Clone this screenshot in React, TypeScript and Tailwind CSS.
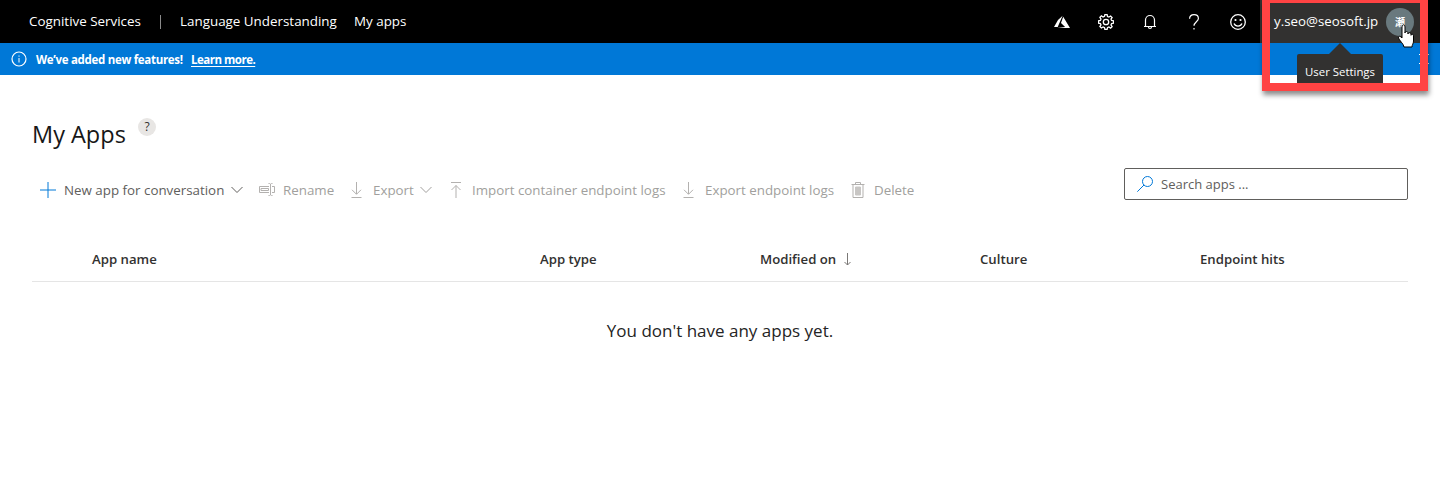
import React from "react";

type P = { children?: React.ReactNode; className?: string };

const Icon = ({ children, className = "" }: P) => (
  <svg viewBox="0 0 16 16" className={`size-4 shrink-0 ${className}`} fill="none" stroke="currentColor" strokeWidth="1">
    {children}
  </svg>
);

const Chevron = ({ className = "" }: P) => (
  <svg viewBox="0 0 12 8" className={`h-2 w-3 shrink-0 ${className}`} fill="none" stroke="currentColor">
    <path d="M.5 1 6 6.5 11.5 1" />
  </svg>
);

const Download = () => (
  <Icon className="text-[#b3b1af]">
    <path d="M7.5 0v12M3 7.800l4.500 4.500L12 7.800M2.500 15.500h10" />
  </Icon>
);

const Label = ({ children, className = "" }: P) => (
  <span className={`shrink-0 whitespace-nowrap ${className}`}>{children}</span>
);

function TopBar() {
  return (
    <header className="flex h-[43px] items-center bg-black text-[13.4px] text-white">
      <Label className="ml-[29px] w-[112px]">Cognitive Services</Label>
      <span className="ml-[19px] h-[14px] w-px bg-[#8a8a8a]" />
      <Label className="ml-[19px] w-[156px]">Language Understanding</Label>
      <Label className="ml-[18px] w-[54px]">My apps</Label>
      <div className="ml-auto flex items-center gap-7">
        <svg viewBox="0 0 16 16" className="size-4" fill="#fff">
          <path d="M8.6 1.8 4 5.9 0 13h3.7zM9.2 2.8 7 8.9l4.1 4.2-8 .9H16z" />
        </svg>
        <svg viewBox="0 0 16 16" className="size-4" fill="none" stroke="#fff" strokeWidth="1.3">
          <path d="M6.9.6h2.2l.4 1.9 1.4.6 1.7-1.1 1.5 1.5L13 5.1l.6 1.4 1.9.4v2.2l-1.9.4-.6 1.4 1.1 1.7-1.5 1.5-1.7-1.1-1.4.6-.4 1.9H6.9l-.4-1.9-1.4-.6L3.4 14l-1.5-1.5L3 10.9l-.6-1.4-1.9-.4V6.9l1.9-.4L3 5.1 1.9 3.4l1.5-1.5L5.1 3l1.4-.6z" />
          <circle cx="8" cy="8" r="2.7" />
        </svg>
        <svg viewBox="0 0 16 16" className="size-4" fill="none" stroke="#fff" strokeWidth="1.2">
          <path d="M3.5 12.5V6a4.5 4.5 0 0 1 9 0v6.5M2 12.5h12M6.5 13a1.5 1.5 0 0 0 3 0" />
        </svg>
        <svg viewBox="0 0 16 16" className="size-4" fill="none" stroke="#fff" strokeWidth="1.2">
          <path d="M3.6 4.8C3.6 2 5.5.7 8 .7s4.400 1.500 4.400 3.800C12.400 7.500 8 8 8 11.800M8 13.900v1.600" />
        </svg>
        <svg viewBox="0 0 16 16" className="size-4" fill="none" stroke="#fff" strokeWidth="1.3">
          <circle cx="8" cy="8" r="7.3" />
          <path d="M4 9.5c1.4 3.4 6.6 3.4 8 0" />
          <circle cx="5.5" cy="6" r="1.1" fill="#fff" stroke="none" />
          <circle cx="10.5" cy="6" r="1.1" fill="#fff" stroke="none" />
        </svg>
      </div>
      <div className="mr-5 ml-[14px] flex h-full w-[160px] items-center bg-[#323130] pl-[14px]">
        <Label className="w-[112px] text-[13.3px]">y.seo@seosoft.jp</Label>
        <span className="flex size-7 items-center justify-center rounded-full bg-[#69797e] font-['Noto_Sans_CJK_JP',sans-serif] text-[10px] font-bold">瀬</span>
      </div>
    </header>
  );
}

function Banner() {
  return (
    <div className="flex h-8 items-center bg-[#0078d7] text-[11.5px] font-bold text-white">
      <Icon className="ml-[11px]">
        <circle cx="8" cy="8" r="7" strokeWidth="1.2" />
        <path d="M8 7v4.500M8 4.500v1.200" />
      </Icon>
      <Label className="ml-[9px] w-[148px] pt-0.5 tracking-[-0.3px]">We’ve added new features!</Label>
      <Label className="ml-[7px] pt-0.5 tracking-[-0.5px] underline underline-offset-2">Learn more.</Label>
      <Icon className="mr-2 ml-auto">
        <path d="m3 3 10 10M13 3 3 13" />
      </Icon>
    </div>
  );
}

function UserHighlight() {
  return (
    <div className="absolute top-0 left-[1262px] h-[91px] w-[166px] border-8 border-t-[3px] border-[#ff4343] shadow-[1px_4px_5px_rgba(0,0,0,0.45)]">
      <svg viewBox="0 0 24 12" className="absolute top-10 left-[58px] h-3 w-6" fill="#323130">
        <path d="M12 0 24 12H0z" />
      </svg>
      <div className="absolute top-[51px] left-[27px] h-[29px] w-[86px] rounded-t-[2px] bg-[#323130] pt-2 text-center text-[11.4px] leading-[20px] font-medium text-white">
        User Settings
      </div>
      <svg viewBox="0 0 18 24" className="absolute top-[21px] left-[127px] h-6 w-[18px]" fill="#fff" stroke="#000" strokeWidth="1">
        <path d="M5 14V3c0-3 3-3 3 0v6c0-2 3-2 3 0v1c0-2 3-1.500 3 .3v1c0-1.700 2.500-1.300 2.500.500V17c0 3-1.500 3.500-1.500 6H7c0-2.500-5-7-5.500-9-.5-2 1.500-2.500 3.500 0z" />
      </svg>
    </div>
  );
}

function Toolbar() {
  return (
    <div className="flex h-8 items-center text-[13.35px] text-[#a19f9d]">
      <Icon className="ml-2 text-[#0078d7]">
        <path d="M8 0v16M0 8h16" />
      </Icon>
      <Label className="ml-2 w-[159px] pt-px text-[#605e5c]">New app for conversation</Label>
      <Chevron className="ml-2 text-[#605e5c]" />
      <div className="ml-4 flex items-center gap-2">
        <Icon className="text-[#b3b1af]">
          <path d="M10 4.500H.5v6H10M13 4.500h2.500v6H13M11.500 2v11M9.500 1.500h1l1 .7 1-.7h1M9.500 13.500h1l1-.7 1 .7h1M2 6.500h7.500v2H2z" />
        </Icon>
        <Label className="w-[50px] pt-px">Rename</Label>
      </div>
      <div className="ml-4 flex items-center gap-2">
        <Download />
        <Label className="w-[39px] pt-px">Export</Label>
        <Chevron />
      </div>
      <div className="ml-4 flex items-center gap-2">
        <Icon className="text-[#b3b1af]">
          <path d="M8 16V3.500M3.500 8 8 3.500 12.500 8M3 .5h10" />
        </Icon>
        <Label className="w-[193px] pt-px">Import container endpoint logs</Label>
      </div>
      <div className="ml-4 flex items-center gap-2">
        <Download />
        <Label className="w-[129px] pt-px">Export endpoint logs</Label>
      </div>
      <div className="ml-4 flex items-center gap-2">
        <Icon className="text-[#b3b1af]">
          <path d="M1.500 2.500h13M5.500 2.500v-2h5v2M3 2.500v13h10v-13" />
          <path d="M5.500 5h5v8h-5z" fill="#c8c6c4" stroke="#c8c6c4" />
        </Icon>
        <Label className="pt-px">Delete</Label>
      </div>
      <div className="mb-3 ml-auto flex h-8 w-[284px] items-center rounded-[2px] border border-[#605e5c] pl-3 text-[13px] text-[#605e5c]">
        <Icon className="text-[#0078d7]">
          <circle cx="10.5" cy="5.5" r="5" />
          <path d="m7 9-6.700 6.700" />
        </Icon>
        <Label className="ml-2 pt-0.5">Search apps ...</Label>
      </div>
    </div>
  );
}

export default function App() {
  return (
    <div className="relative h-[496px] w-[1440px] overflow-hidden bg-white font-['Open_Sans','Noto_Sans',sans-serif]">
      <TopBar />
      <Banner />
      <main className="px-8 pt-[42px]">
        <div className="flex h-9 items-center">
          <h1 className="w-[93px] text-[23.5px] whitespace-nowrap text-[#171717]">My Apps</h1>
          <span className="mb-[17px] ml-[13px] flex size-[18px] items-center justify-center rounded-full bg-[#e8e6e4] text-[12px] text-[#323130]">?</span>
        </div>
        <div className="mt-[21px]">
          <Toolbar />
        </div>
        <div className="mt-[30px] grid h-[46px] grid-cols-[448px_220px_220px_220px_1fr] items-center border-b border-[#e5e5e5] pt-0.5 pl-[60px] text-[13.2px] font-semibold text-[#323130]">
          <Label>App name</Label>
          <Label>App type</Label>
          <span className="flex items-center gap-1">
            <Label className="w-[78px]">Modified on</Label>
            <svg viewBox="0 0 10 14" className="h-[14px] w-[10px]" fill="none" stroke="#7a7876">
              <path d="M5.5 1v12M2.5 10l3 3 3-3" />
            </svg>
          </span>
          <Label>Culture</Label>
          <Label>Endpoint hits</Label>
        </div>
        <p className="mt-9 text-center text-[17px] leading-[26px] text-[#242424]">You don't have any apps yet.</p>
      </main>
      <UserHighlight />
    </div>
  );
}
